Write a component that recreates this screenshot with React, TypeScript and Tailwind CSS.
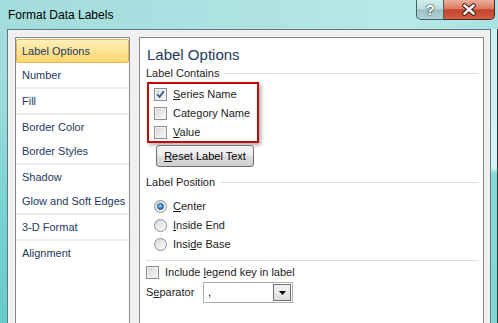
import React from "react";

const Check = ({ checked = false }: { checked?: boolean }) => (
  <div className="w-[13px] h-[13px] shrink-0 border border-[#8e8f8f] bg-[#f4f4f4] p-px">
    <div className="relative w-full h-full bg-[linear-gradient(135deg,#d6d8db,#f6f7f8)]">
      {checked && (
        <svg className="absolute inset-0" width="9" height="9" viewBox="0 0 9 9">
          <path d="M1.3 4.3 L3.6 7 L7.8 1.2" fill="none" stroke="#31508f" strokeWidth="1.7" />
        </svg>
      )}
    </div>
  </div>
);

const Radio = ({ selected = false }: { selected?: boolean }) => (
  <div className="w-[13px] h-[13px] shrink-0 rounded-full border border-[#8e8f8f] bg-[linear-gradient(135deg,#d4d5d7,#ffffff)] flex items-center justify-center">
    {selected && (
      <div className="w-[7px] h-[7px] rounded-full border border-[#1d4e86] bg-[radial-gradient(circle_at_40%_35%,#b4e6ff,#2a86d4_55%,#0f4f94)]" />
    )}
  </div>
);

const items: { label: string; sep?: boolean }[] = [
  { label: "Number", sep: true },
  { label: "Fill", sep: true },
  { label: "Border Color" },
  { label: "Border Styles", sep: true },
  { label: "Shadow" },
  { label: "Glow and Soft Edges", sep: true },
  { label: "3-D Format", sep: true },
  { label: "Alignment" },
];

export default function App() {
  return (
    <div className="w-[498px] h-[323px] overflow-hidden flex flex-col font-['Liberation_Sans',Arial,sans-serif] bg-[linear-gradient(180deg,#a6dfde_0%,#9ddcdb_30%,#7fd3d3_60%,#68c9c9_100%)]">
      {/* Title bar */}
      <div className="h-[29px] shrink-0 flex items-start bg-[linear-gradient(90deg,#a2dcdb_0%,#aee3e2_50%,#b8e9e8_80%,#a9e2e1_100%)]">
        <div className="flex-1 pl-[8px] pt-[7px] text-[12px] leading-[16px] text-black">Format Data Labels</div>
        <div className="flex mr-[3px] h-[20px]">
          <div className="w-[28px] h-[20px] border border-t-0 border-[#415f66] rounded-bl-[5px] bg-[linear-gradient(180deg,#d3ecec_0%,#bcdcdc_48%,#9cc0c1_52%,#b2d3d3_100%)] flex items-center justify-center text-white font-bold text-[15px] leading-none [text-shadow:0_0_1px_#1a2a30,0_0_2px_#1a2a30]">
            ?
          </div>
          <div className="w-[51px] h-[20px] border border-t-0 border-l-0 border-[#4a2620] rounded-br-[5px] bg-[linear-gradient(180deg,#ecae9b_0%,#dc7a62_45%,#c4432b_52%,#d55f42_100%)] flex items-center justify-center">
            <svg width="14" height="13" viewBox="0 0 14 13">
              <path d="M2.5 2.5 L11.5 10.5 M11.5 2.5 L2.5 10.5" stroke="#3b1a14" strokeWidth="4.4" strokeLinecap="square" />
              <path d="M2.5 2.5 L11.5 10.5 M11.5 2.5 L2.5 10.5" stroke="#ffffff" strokeWidth="2.4" strokeLinecap="square" />
            </svg>
          </div>
        </div>
      </div>

      {/* Body */}
      <div className="flex-1 flex">
        <div className="w-[7px] shrink-0" />
        <div className="w-[484px] shrink-0 border border-b-0 border-[#5e7c80] bg-[#f0f0f0] overflow-hidden flex pl-[7px] pt-[7px] gap-[9px]">
          {/* Category list */}
          <div className="w-[115px] h-[300px] shrink-0 border border-[#828790] bg-white pt-px text-[11px] text-[#1e395b]">
            <div className="h-[24px] flex items-center pl-[5px] border border-[#dcb75a] rounded-[2px] bg-[linear-gradient(180deg,#fdf0b8_0%,#fde49a_45%,#fcd56c_100%)]">
              Label Options
            </div>
            {items.map((it) => (
              <React.Fragment key={it.label}>
                <div className="h-[24px] flex items-center pl-[6px]">{it.label}</div>
                {it.sep && <div className="h-[2px] bg-[#eaedf1]" />}
              </React.Fragment>
            ))}
          </div>

          {/* Options panel */}
          <div className="w-[345px] h-[300px] shrink-0 border border-[#828790] bg-white pl-[6px] pr-[4px] text-[11px] text-[#1b1b1b] flex flex-col">
            <div className="mt-[7px] h-[20px] leading-[20px] text-[15px] text-[#1e395b] pl-px">Label Options</div>
            <div className="h-[16px] flex items-center">
              <span className="leading-[16px]">Label Contains</span>
              <div className="flex-1 h-px bg-[#d5dfe5] ml-[5px]" />
            </div>

            <div className="mt-px ml-px w-[112px] h-[61px] border-2 border-[#c00a0a] shadow-[2px_2px_4px_rgba(0,0,0,0.35)] pt-px pl-[5px]">
              <div className="h-[19px] flex items-center gap-[6px]">
                <Check checked />
                <span>
                  <span className="underline">S</span>eries Name
                </span>
              </div>
              <div className="h-[19px] flex items-center gap-[6px]">
                <Check />
                <span>
                  Cate<span className="underline">g</span>ory Name
                </span>
              </div>
              <div className="h-[19px] flex items-center gap-[6px]">
                <Check />
                <span>
                  <span className="underline">V</span>alue
                </span>
              </div>
            </div>

            <div className="mt-[2px] ml-[10px] w-[98px] h-[22px] border border-[#707070] rounded-[3px] bg-[linear-gradient(180deg,#f3f3f3_0%,#ebebeb_50%,#dddddd_50%,#cfcfcf_100%)] flex items-center justify-center text-black">
              <span>
                <span className="underline">R</span>eset Label Text
              </span>
            </div>

            <div className="mt-[7px] h-[16px] flex items-center">
              <span className="leading-[16px]">Label Position</span>
              <div className="flex-1 h-px bg-[#d5dfe5] ml-[5px]" />
            </div>

            <div className="mt-[7px] ml-[8px] flex flex-col">
              <div className="h-[19px] flex items-center gap-[6px]">
                <Radio selected />
                <span>
                  <span className="underline">C</span>enter
                </span>
              </div>
              <div className="h-[19px] flex items-center gap-[6px]">
                <Radio />
                <span>
                  <span className="underline">I</span>nside End
                </span>
              </div>
              <div className="h-[19px] flex items-center gap-[6px]">
                <Radio />
                <span>
                  Insi<span className="underline">d</span>e Base
                </span>
              </div>
            </div>

            <div className="mt-[6px] h-px bg-[#dadde1]" />

            <div className="mt-[3px] h-[16px] flex items-center gap-[6px]">
              <Check />
              <span>
                Include <span className="underline">l</span>egend key in label
              </span>
            </div>

            <div className="mt-[2px] h-[21px] flex items-center">
              <span className="w-[57px] shrink-0">
                S<span className="underline">e</span>parator
              </span>
              <div className="w-[90px] h-[21px] border border-[#abadb3] bg-white flex items-center pl-[4px] pr-px">
                <span className="flex-1 text-black leading-none">,</span>
                <div className="w-[18px] h-[17px] border border-[#707070] bg-[linear-gradient(180deg,#f4f4f4,#dcdcdc)] flex items-center justify-center">
                  <svg width="7" height="4" viewBox="0 0 7 4">
                    <path d="M0 0 H7 L3.5 4 Z" fill="#000" />
                  </svg>
                </div>
              </div>
            </div>
          </div>
        </div>
        <div className="flex-1 bg-[linear-gradient(180deg,#c9efef_0%,#d6f3f3_45%,#86d9d9_47%,#7fd6d6_100%)] border-r border-[#2d3d40]" />
      </div>
    </div>
  );
}
